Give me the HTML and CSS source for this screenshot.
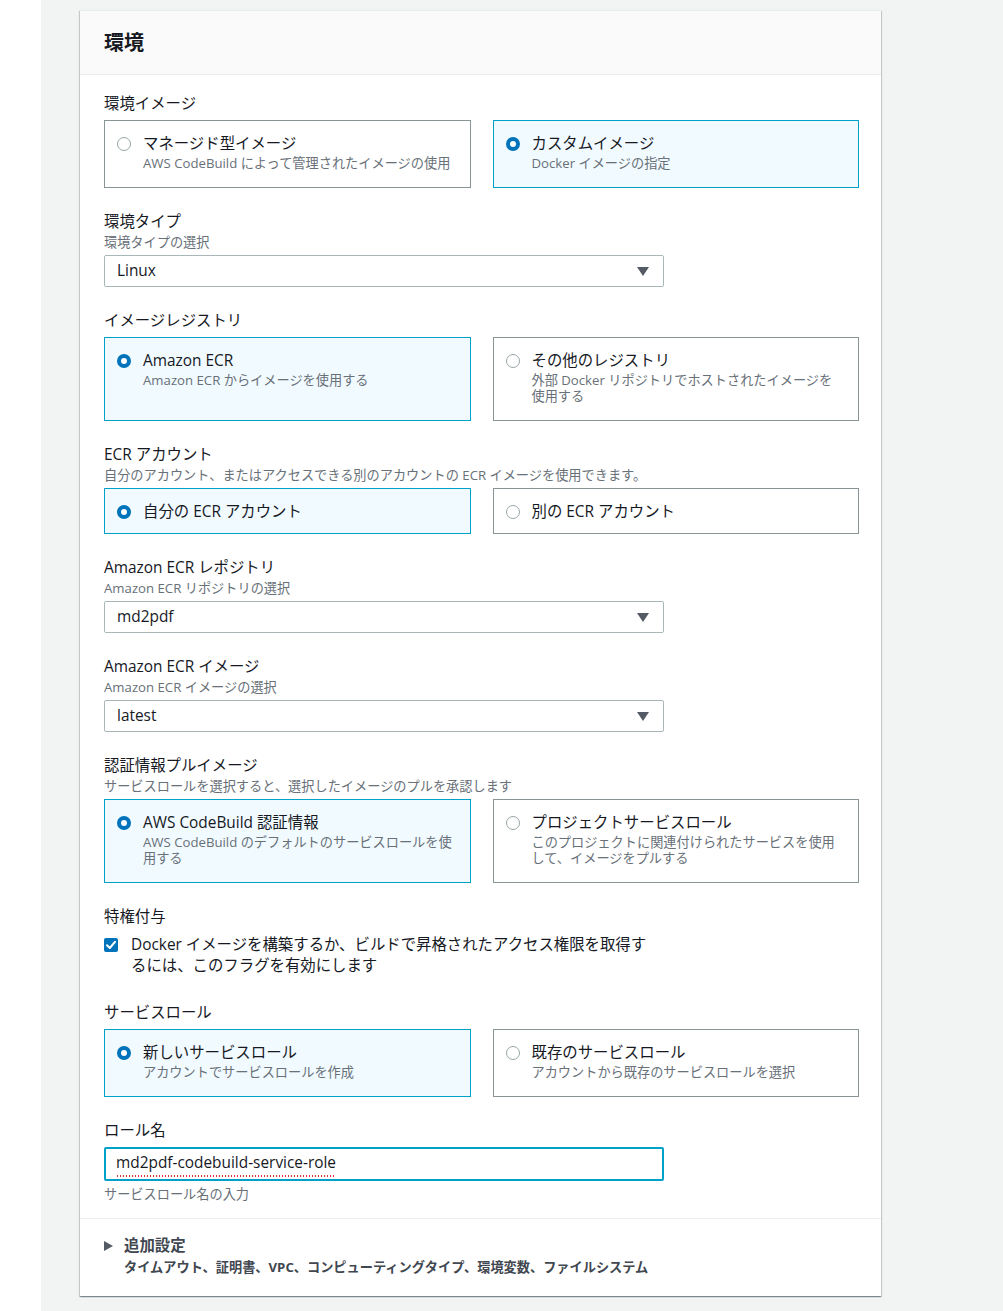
FILE: index.html
```html
<!DOCTYPE html>
<html lang="ja">
<head>
<meta charset="utf-8">
<title>環境</title>
<link rel="stylesheet" href="styles.css">
</head>
<body>
<div class="page">
  <section class="panel">
    <header class="panel-header"><h2 class="panel-title">環境</h2></header>
    <div class="panel-body">

      <div class="field">
        <div class="label">環境イメージ</div>
        <div class="tiles control">
          <div class="tile">
            <span class="radio"></span>
            <div class="tile-text">
              <div class="tile-title">マネージド型イメージ</div>
              <div class="tile-desc">AWS CodeBuild によって管理されたイメージの使用</div>
            </div>
          </div>
          <div class="tile selected">
            <span class="radio checked"></span>
            <div class="tile-text">
              <div class="tile-title">カスタムイメージ</div>
              <div class="tile-desc">Docker イメージの指定</div>
            </div>
          </div>
        </div>
      </div>

      <div class="field">
        <div class="label">環境タイプ</div>
        <div class="desc">環境タイプの選択</div>
        <div class="select control"><span>Linux</span><span class="caret"></span></div>
      </div>

      <div class="field">
        <div class="label">イメージレジストリ</div>
        <div class="tiles control">
          <div class="tile selected">
            <span class="radio checked"></span>
            <div class="tile-text">
              <div class="tile-title">Amazon ECR</div>
              <div class="tile-desc">Amazon ECR からイメージを使用する</div>
            </div>
          </div>
          <div class="tile">
            <span class="radio"></span>
            <div class="tile-text">
              <div class="tile-title">その他のレジストリ</div>
              <div class="tile-desc">外部 Docker リポジトリでホストされたイメージを<br>使用する</div>
            </div>
          </div>
        </div>
      </div>

      <div class="field">
        <div class="label">ECR アカウント</div>
        <div class="desc">自分のアカウント、またはアクセスできる別のアカウントの ECR イメージを使用できます。</div>
        <div class="tiles control">
          <div class="tile selected">
            <span class="radio checked"></span>
            <div class="tile-text"><div class="tile-title">自分の ECR アカウント</div></div>
          </div>
          <div class="tile">
            <span class="radio"></span>
            <div class="tile-text"><div class="tile-title">別の ECR アカウント</div></div>
          </div>
        </div>
      </div>

      <div class="field">
        <div class="label">Amazon ECR レポジトリ</div>
        <div class="desc">Amazon ECR リポジトリの選択</div>
        <div class="select control"><span>md2pdf</span><span class="caret"></span></div>
      </div>

      <div class="field">
        <div class="label">Amazon ECR イメージ</div>
        <div class="desc">Amazon ECR イメージの選択</div>
        <div class="select control"><span>latest</span><span class="caret"></span></div>
      </div>

      <div class="field">
        <div class="label">認証情報プルイメージ</div>
        <div class="desc">サービスロールを選択すると、選択したイメージのプルを承認します</div>
        <div class="tiles control">
          <div class="tile selected">
            <span class="radio checked"></span>
            <div class="tile-text">
              <div class="tile-title">AWS CodeBuild 認証情報</div>
              <div class="tile-desc">AWS CodeBuild のデフォルトのサービスロールを使<br>用する</div>
            </div>
          </div>
          <div class="tile">
            <span class="radio"></span>
            <div class="tile-text">
              <div class="tile-title">プロジェクトサービスロール</div>
              <div class="tile-desc">このプロジェクトに関連付けられたサービスを使用<br>して、イメージをプルする</div>
            </div>
          </div>
        </div>
      </div>

      <div class="field">
        <div class="label">特権付与</div>
        <div class="check-row">
          <span class="checkbox">
            <svg width="14" height="14" viewBox="0 0 14 14"><path d="M3 7.2 L5.8 10 L11 3.8" fill="none" stroke="#fff" stroke-width="2" stroke-linecap="round" stroke-linejoin="round"/></svg>
          </span>
          <span class="check-text">Docker イメージを構築するか、ビルドで昇格されたアクセス権限を取得す<br>るには、このフラグを有効にします</span>
        </div>
      </div>

      <div class="field">
        <div class="label">サービスロール</div>
        <div class="tiles control">
          <div class="tile selected">
            <span class="radio checked"></span>
            <div class="tile-text">
              <div class="tile-title">新しいサービスロール</div>
              <div class="tile-desc">アカウントでサービスロールを作成</div>
            </div>
          </div>
          <div class="tile">
            <span class="radio"></span>
            <div class="tile-text">
              <div class="tile-title">既存のサービスロール</div>
              <div class="tile-desc">アカウントから既存のサービスロールを選択</div>
            </div>
          </div>
        </div>
      </div>

      <div class="field">
        <div class="label">ロール名</div>
        <div class="input control"><span class="spell">md2pdf-codebuild-service-role</span></div>
        <div class="desc hint">サービスロール名の入力</div>
      </div>

    </div>
    <div class="panel-footer">
      <div class="expand-title"><span class="expand-caret"></span><span>追加設定</span></div>
      <div class="expand-sub">タイムアウト、証明書、VPC、コンピューティングタイプ、環境変数、ファイルシステム</div>
    </div>
  </section>
</div>
</body>
</html>
```

FILE: styles.css
```css
html, body {
  margin: 0;
  padding: 0;
  background: #ffffff;
}

body {
  font-family: "Open Sans", "Noto Sans CJK JP", sans-serif;
  color: #16191f;
  font-size: 15.4px;
  line-height: 22px;
}

.page {
  margin-left: 41px;
  background: #f2f3f3;
  padding: 10px 0 13px 39px;
  min-height: 1311px;
  box-sizing: border-box;
}

.panel {
  width: 801px;
  background: #ffffff;
  box-shadow: 0 1px 1px 0 rgba(0, 28, 36, 0.3), 1px 1px 1px 0 rgba(0, 28, 36, 0.15), -1px 1px 1px 0 rgba(0, 28, 36, 0.15);
  border-top: 1px solid #eaeded;
}

.panel-header {
  height: 64px;
  padding: 0 24px;
  background: #fafafa;
  border-bottom: 1px solid #eaeded;
  display: flex;
  align-items: center;
  box-sizing: border-box;
}

.panel-title {
  margin: 0;
  font-size: 20px;
  font-weight: 700;
  line-height: 26px;
  color: #16191f;
}

.panel-body {
  padding: 16px 22px 15px 24px;
}

.field + .field {
  margin-top: 21px;
}

.label {
  font-size: 15.4px;
  line-height: 22px;
  padding-top: 2px;
  color: #16191f;
}

.desc {
  font-size: 13.2px;
  line-height: 17px;
  padding-top: 1px;
  color: #687078;
}

.control {
  margin-top: 5px;
}

.desc + .control {
  margin-top: 4px;
}

.tiles {
  display: grid;
  grid-template-columns: 1fr 1fr;
  column-gap: 22px;
}

.tile {
  border: 1px solid #879596;
  padding: 12px 16px 10px 12px;
  display: flex;
  align-items: flex-start;
  gap: 12px;
  background: #ffffff;
}

.tile.selected {
  border-color: #00a1c9;
  background: #f1faff;
}

.radio {
  flex: none;
  width: 14px;
  height: 14px;
  margin-top: 4px;
  border-radius: 50%;
  border: 1px solid #98a6a7;
  background: #ffffff;
  box-sizing: border-box;
}

.radio.checked {
  border: 4px solid #0073bb;
  background: #ffffff;
}

.tile-title {
  font-size: 15.4px;
  line-height: 22px;
  color: #16191f;
}

.tile-desc {
  font-size: 13.2px;
  line-height: 16px;
  color: #687078;
  margin-bottom: 6px;
}

.select {
  width: 560px;
  height: 32px;
  box-sizing: border-box;
  border: 1px solid #aab7b8;
  border-radius: 2px;
  padding: 0 14px 0 12px;
  display: flex;
  align-items: center;
  justify-content: space-between;
  font-size: 15.4px;
  background: #ffffff;
}

.caret {
  width: 0;
  height: 0;
  border-left: 6px solid transparent;
  border-right: 6px solid transparent;
  border-top: 9px solid #545b64;
}

.check-row {
  margin-top: 6px;
  display: flex;
  align-items: flex-start;
  gap: 13px;
  padding-bottom: 3px;
}

.checkbox {
  flex: none;
  width: 14px;
  height: 14px;
  margin-top: 4px;
  border-radius: 2px;
  background: #0073bb;
  display: flex;
}

.check-text {
  font-size: 15.4px;
  line-height: 21px;
  color: #16191f;
}

.input {
  width: 560px;
  height: 34px;
  box-sizing: border-box;
  border: 2px solid #00a1c9;
  border-radius: 2px;
  padding: 0 10px;
  display: flex;
  align-items: center;
  font-size: 15.4px;
  background: #ffffff;
}

.spell {
  padding-bottom: 3px;
  background-image: radial-gradient(circle, #e0302a 0.8px, transparent 1px);
  background-size: 3px 2px;
  background-repeat: repeat-x;
  background-position: 0 100%;
}

.hint {
  margin-top: 4px;
}

.panel-footer {
  border-top: 1px solid #eaeded;
  padding: 16px 24px 19px 24px;
}

.expand-title {
  display: flex;
  align-items: center;
  gap: 11px;
  font-size: 15.4px;
  line-height: 22px;
  font-weight: 700;
  color: #414750;
}

.expand-caret {
  width: 0;
  height: 0;
  border-top: 5px solid transparent;
  border-bottom: 5px solid transparent;
  border-left: 9px solid #545b64;
}

.expand-sub {
  padding-left: 20px;
  font-size: 13.2px;
  line-height: 20px;
  font-weight: 700;
  color: #414750;
}
```
